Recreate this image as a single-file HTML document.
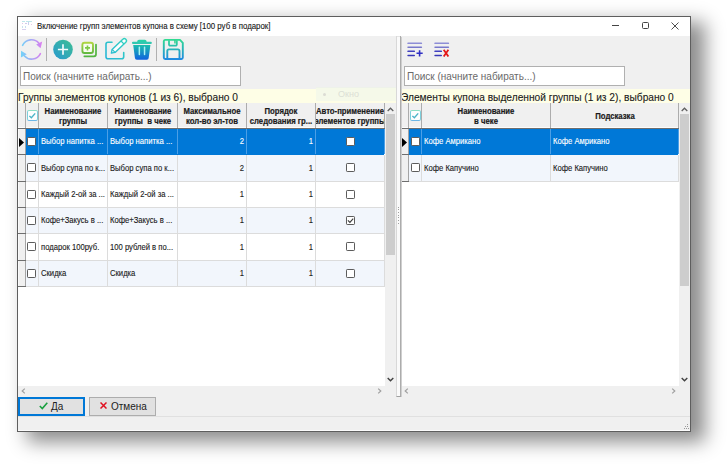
<!DOCTYPE html><html><head><meta charset="utf-8"><style>
*{box-sizing:border-box;margin:0;padding:0}
html,body{width:727px;height:467px;background:#fff;overflow:hidden;font-family:"Liberation Sans",sans-serif;color:#000}
div,span,svg{position:absolute}
.t{white-space:nowrap}
</style></head><body>
<div style="left:17px;top:16px;width:674px;height:416px;background:#f0f0f0;border:1px solid #5e5e5e;box-shadow:12px 8px 18px 2px rgba(0,0,0,0.45)"></div>
<div style="left:18px;top:17px;width:672px;height:19px;background:#fff"></div>
<svg style="left:22px;top:21px" width="11" height="10" viewBox="0 0 11 10"><rect x="0" y="0" width="3" height="1" fill="#bfe6ea"/><rect x="4" y="0" width="6" height="1" fill="#bfe6ea"/><rect x="0" y="2" width="1" height="1" fill="#e0c8e8"/><rect x="3" y="2" width="2" height="1" fill="#d0c8ea"/><rect x="6" y="1" width="1" height="3" fill="#c8d0ee"/><rect x="9" y="3" width="1" height="1" fill="#e8c8e8"/><rect x="0" y="5" width="1" height="2" fill="#c8e0ee"/><rect x="3" y="5" width="1" height="2" fill="#c8e0ee"/><rect x="0" y="8" width="4" height="1" fill="#d8d0ee"/></svg>
<div class="t" style="left:37px;top:22.4px;font-size:8.2px;color:#1a1a1a;-webkit-text-stroke:0.12px #1a1a1a;transform:scaleX(0.96);transform-origin:0 50%">Включение групп элементов купона в схему [100 руб в подарок]</div>
<div style="left:612px;top:25px;width:7px;height:1px;background:#444"></div>
<div style="left:642px;top:22px;width:7px;height:7px;border:1px solid #444;border-radius:1.5px"></div>
<svg style="left:671px;top:22px" width="8" height="8" viewBox="0 0 8 8"><path d="M0.5 0.5L7.5 7.5M7.5 0.5L0.5 7.5" stroke="#444" stroke-width="0.95"/></svg>
<svg style="left:18px;top:36px" width="172" height="27" viewBox="18 36 172 27">
<defs>
<linearGradient id="rg" gradientUnits="userSpaceOnUse" x1="22" y1="0" x2="42" y2="0"><stop offset="0" stop-color="#76d0f8"/><stop offset="1" stop-color="#dc7cf0"/></linearGradient>
<linearGradient id="pg" gradientUnits="userSpaceOnUse" x1="55" y1="58" x2="71" y2="41"><stop offset="0" stop-color="#2a9ccc"/><stop offset="1" stop-color="#3cbc98"/></linearGradient>
<linearGradient id="cg" gradientUnits="userSpaceOnUse" x1="0" y1="41" x2="0" y2="57"><stop offset="0" stop-color="#b8d840"/><stop offset="1" stop-color="#48b040"/></linearGradient>
<linearGradient id="eg" gradientUnits="userSpaceOnUse" x1="105" y1="59" x2="125" y2="40"><stop offset="0" stop-color="#28b4d8"/><stop offset="1" stop-color="#30d0c0"/></linearGradient>
<linearGradient id="tg" gradientUnits="userSpaceOnUse" x1="0" y1="40" x2="0" y2="60"><stop offset="0" stop-color="#20dc9c"/><stop offset="1" stop-color="#1060e0"/></linearGradient>
<linearGradient id="sg" gradientUnits="userSpaceOnUse" x1="0" y1="39" x2="0" y2="60"><stop offset="0" stop-color="#30dc90"/><stop offset="1" stop-color="#2088e4"/></linearGradient>
</defs>
<!-- refresh: center (31.5,49.5) r 9.8 -->
<path d="M22.6 45.4 A9.8 9.8 0 0 1 38.9 43.2" fill="none" stroke="url(#rg)" stroke-width="1.6" stroke-linecap="round"/>
<path d="M36.2 44.6 L42.2 41.4 L40.6 48.2 Z" fill="url(#rg)"/>
<path d="M40.4 53.6 A9.8 9.8 0 0 1 24.2 55.8" fill="none" stroke="url(#rg)" stroke-width="1.6" stroke-linecap="round"/>
<path d="M21.1 50.8 L20.9 57.6 L26.8 54.3 Z" fill="url(#rg)"/>
<rect x="46" y="38" width="1" height="23" fill="#b0b0b0"/>
<!-- plus circle -->
<circle cx="63" cy="49.5" r="9.8" fill="url(#pg)"/>
<path d="M63 44.3 V54.7 M57.9 49.5 H68.1" stroke="#f4fbfb" stroke-width="1.7"/>
<!-- copy add -->
<path d="M96 44.5 V54.3 A2 2 0 0 1 94 56.3 H84.3" fill="none" stroke="#52b440" stroke-width="1.7" stroke-linecap="round"/>
<rect x="82.4" y="42.8" width="10.6" height="10.2" rx="2" fill="#f8fcf0" stroke="url(#cg)" stroke-width="1.9"/>
<path d="M87.5 45.4 V50.4 M85 47.9 H90" stroke="#7cc844" stroke-width="1.6"/>
<!-- edit -->
<path d="M112 42.2 H108 A2 2 0 0 0 106 44.2 V56.8 A2 2 0 0 0 108 58.8 H121.7 A2 2 0 0 0 123.7 56.8 V52.5" fill="none" stroke="url(#eg)" stroke-width="1.6" stroke-linecap="round"/>
<path d="M111.4 53.1 L112.1 49.4 L122.8 39.2 A2.1 2.1 0 0 1 125.8 42.2 L115.1 52.4 Z" fill="#fcfefe" stroke="url(#eg)" stroke-width="1.4" stroke-linejoin="round"/>
<path d="M121 41 L124 44 M112.1 49.4 L115.1 52.4" stroke="url(#eg)" stroke-width="1.2"/>
<!-- trash -->
<path d="M137.2 42 V41.5 A1.8 1.8 0 0 1 139 39.7 H144.8 A1.8 1.8 0 0 1 146.6 41.5 V42 Z" fill="#28d0a8"/>
<rect x="132" y="41.8" width="19.8" height="2.1" rx="1" fill="#30c8b0"/>
<path d="M133.2 45 H150.4 L148.7 57.8 A2 2 0 0 1 146.7 59.8 H136.9 A2 2 0 0 1 134.9 57.8 Z" fill="url(#tg)"/>
<rect x="138.6" y="46.4" width="1.5" height="8.8" rx="0.7" fill="#a8f4f0"/>
<rect x="143.8" y="46.4" width="1.5" height="8.8" rx="0.7" fill="#a8f0f4"/>
<rect x="156" y="38" width="1" height="23" fill="#b0b0b0"/>
<!-- save -->
<path d="M165 39.9 H180 L182.8 42.8 V57.6 A1.4 1.4 0 0 1 181.4 59 H165.2 A1.4 1.4 0 0 1 163.8 57.6 V41.2 A1.3 1.3 0 0 1 165 39.9 Z" fill="none" stroke="url(#sg)" stroke-width="1.9" stroke-linejoin="round"/>
<path d="M169 40.2 V44.4 A1.2 1.2 0 0 0 170.2 45.6 H175.6 A1.2 1.2 0 0 0 176.8 44.4 V40.2" fill="none" stroke="url(#sg)" stroke-width="1.8"/>
<rect x="174.2" y="40" width="1.5" height="3.5" fill="#30d090"/>
<path d="M167.3 59 V51 A1.6 1.6 0 0 1 168.9 49.4 H177.9 A1.6 1.6 0 0 1 179.5 51 V59" fill="none" stroke="url(#sg)" stroke-width="1.9"/>
</svg>
<svg style="left:407px;top:41px" width="18" height="17" viewBox="0 0 18 17"><rect x="0.3" y="1.6" width="14.8" height="1.5" rx="0.7" fill="#8e8ed6"/><rect x="0.3" y="5.4" width="14.8" height="1.5" rx="0.7" fill="#7878cc"/><rect x="0.3" y="9.6" width="7.7" height="1.5" rx="0.7" fill="#4040c0"/><rect x="0.3" y="13.7" width="7.7" height="1.5" rx="0.7" fill="#3838b8"/><path d="M12.6 9.2 V15.4 M9.5 12.3 H15.7" stroke="#3030c4" stroke-width="1.6"/></svg>
<svg style="left:434px;top:41px" width="18" height="17" viewBox="0 0 18 17"><rect x="0.3" y="1.6" width="14.8" height="1.5" rx="0.7" fill="#8e8ed6"/><rect x="0.3" y="5.4" width="14.8" height="1.5" rx="0.7" fill="#7878cc"/><rect x="0.3" y="9.6" width="7.7" height="1.5" rx="0.7" fill="#4040c0"/><rect x="0.3" y="13.7" width="7.7" height="1.5" rx="0.7" fill="#3838b8"/><path d="M9.7 8.8 L14.4 15.4 M14.4 8.8 L9.7 15.4" stroke="#e41818" stroke-width="1.8"/></svg>
<div style="left:20px;top:66px;width:221px;height:20px;background:#fff;border:1px solid #b0b0b0"></div>
<div class="t" style="left:23px;top:71px;font-size:10px;color:#6a6a6a">Поиск (начните набирать...)</div>
<div style="left:18px;top:89px;width:378px;height:14px;background:#fefee6"></div>
<div class="t" style="left:18px;top:92px;font-size:10.2px;color:#1a1a1a;-webkit-text-stroke:0.1px #1a1a1a">Группы элементов купонов (1 из 6), выбрано 0</div>
<div style="left:404px;top:66px;width:221px;height:20px;background:#fff;border:1px solid #b0b0b0"></div>
<div class="t" style="left:407px;top:71px;font-size:10px;color:#6a6a6a">Поиск (начните набирать...)</div>
<div style="left:401px;top:89px;width:289px;height:14px;background:#fefee6"></div>
<div class="t" style="left:401px;top:92px;font-size:10.2px;color:#1a1a1a;-webkit-text-stroke:0.1px #1a1a1a">Элементы купона выделенной группы (1 из 2), выбрано 0</div>
<div style="left:316px;top:87px;width:80px;height:14px;background:#f5f9e9;border-top:1px solid #eef2ea"></div>
<div style="left:323px;top:93px;width:3px;height:3px;border-radius:2px;background:#dcdcd4"></div>
<div class="t" style="left:338px;top:88.5px;font-size:9px;color:#dcdfd6">Окно</div>
<div style="left:18px;top:103px;width:367px;height:283px;background:#fff"></div>
<div style="left:18px;top:103px;width:366px;height:25px;background:#f0f0f0"></div>
<div style="left:18px;top:127px;width:366px;height:1px;background:#fcfcfc"></div>
<div style="left:18px;top:128px;width:367px;height:1px;background:#6e6e6e"></div>
<div style="left:25px;top:103px;width:1px;height:25px;background:#acacac"></div>
<div style="left:38px;top:103px;width:1px;height:25px;background:#acacac"></div>
<div style="left:107px;top:103px;width:1px;height:25px;background:#acacac"></div>
<div style="left:177px;top:103px;width:1px;height:25px;background:#acacac"></div>
<div style="left:246px;top:103px;width:1px;height:25px;background:#acacac"></div>
<div style="left:315px;top:103px;width:1px;height:25px;background:#acacac"></div>
<div style="left:384px;top:103px;width:1px;height:25px;background:#acacac"></div>
<div style="left:27px;top:110px;width:11px;height:11px;border:1.4px solid;border-color:#8cdec4 #7ccfdc #6cb6e6 #7ccfdc;border-radius:2px;background:#fdfefe"></div>
<svg style="left:29px;top:112px" width="7" height="7" viewBox="0 0 7 7"><path d="M0.4 3.9 L2.4 5.8 L6.2 1.4" fill="none" stroke="#4cb4c8" stroke-width="1.4"/></svg>
<div style="left:39px;top:103px;width:68px;height:25px;overflow:hidden"><div class="t" style="left:50%;top:4.2px;transform:translateX(-50%) scaleX(0.9);font-size:8.6px;font-weight:bold;line-height:9.7px;text-align:center;color:#1a1a1a;-webkit-text-stroke:0.2px #1a1a1a">Наименование<br>группы</div></div>
<div style="left:108px;top:103px;width:69px;height:25px;overflow:hidden"><div class="t" style="left:50%;top:4.2px;transform:translateX(-50%) scaleX(0.9);font-size:8.6px;font-weight:bold;line-height:9.7px;text-align:center;color:#1a1a1a;-webkit-text-stroke:0.2px #1a1a1a">Наименование<br>группы&nbsp; в чеке</div></div>
<div style="left:178px;top:103px;width:68px;height:25px;overflow:hidden"><div class="t" style="left:50%;top:4.2px;transform:translateX(-50%) scaleX(0.9);font-size:8.6px;font-weight:bold;line-height:9.7px;text-align:center;color:#1a1a1a;-webkit-text-stroke:0.2px #1a1a1a">Максимальное<br>кол-во эл-тов</div></div>
<div style="left:247px;top:103px;width:68px;height:25px;overflow:hidden"><div class="t" style="left:50%;top:4.2px;transform:translateX(-50%) scaleX(0.9);font-size:8.6px;font-weight:bold;line-height:9.7px;text-align:center;color:#1a1a1a;-webkit-text-stroke:0.2px #1a1a1a">Порядок<br>следования гр...</div></div>
<div style="left:316px;top:103px;width:68px;height:25px;overflow:hidden"><div class="t" style="left:50%;top:4.2px;transform:translateX(-50%) scaleX(0.9);font-size:8.6px;font-weight:bold;line-height:9.7px;text-align:center;color:#1a1a1a;-webkit-text-stroke:0.2px #1a1a1a">Авто-применение<br>элементов группы</div></div>
<div style="left:26px;top:129px;width:358px;height:26px;background:#0078d7"></div>
<div style="left:18px;top:129px;width:7px;height:25px;background:#f0f0f0;border-left:1px solid #fafafa"></div>
<div style="left:18px;top:154px;width:8px;height:1px;background:#6e6e6e"></div>
<div style="left:25px;top:129px;width:1px;height:25px;background:#a4a4a4"></div>
<svg style="left:19px;top:138px" width="6" height="9" viewBox="0 0 6 9"><path d="M0 0 L5 4.5 L0 9 Z" fill="#000"/></svg>
<div style="left:38px;top:129px;width:1px;height:25px;background:#4c9fe6"></div>
<div style="left:107px;top:129px;width:1px;height:25px;background:#4c9fe6"></div>
<div style="left:177px;top:129px;width:1px;height:25px;background:#4c9fe6"></div>
<div style="left:246px;top:129px;width:1px;height:25px;background:#4c9fe6"></div>
<div style="left:315px;top:129px;width:1px;height:25px;background:#4c9fe6"></div>
<div style="left:384px;top:129px;width:1px;height:25px;background:#4c9fe6"></div>
<div style="left:27px;top:137px;width:9px;height:9px;background:#fff;border:1px solid #5c5c5c;border-radius:1.2px"></div>
<div class="t" style="left:41px;top:128.8px;line-height:25px;font-size:8.5px;color:#fff;-webkit-text-stroke:0.12px #fff;transform:scaleX(0.9);transform-origin:0 50%">Выбор напитка ...</div>
<div class="t" style="left:110px;top:128.8px;line-height:25px;font-size:8.5px;color:#fff;-webkit-text-stroke:0.12px #fff;transform:scaleX(0.9);transform-origin:0 50%">Выбор напитка ...</div>
<div class="t" style="left:178px;top:128.8px;width:66px;text-align:right;line-height:25px;font-size:8.5px;color:#fff;-webkit-text-stroke:0.12px #fff;transform:scaleX(0.9);transform-origin:100% 50%">2</div>
<div class="t" style="left:247px;top:128.8px;width:66px;text-align:right;line-height:25px;font-size:8.5px;color:#fff;-webkit-text-stroke:0.12px #fff;transform:scaleX(0.9);transform-origin:100% 50%">1</div>
<div style="left:346px;top:137px;width:9px;height:9px;background:#fff;border:1px solid #5c5c5c;border-radius:1.2px"></div>
<div style="left:26px;top:155px;width:358px;height:27px;background:#f2f6fc"></div>
<div style="left:18px;top:155px;width:7px;height:26px;background:#f0f0f0;border-left:1px solid #fafafa"></div>
<div style="left:18px;top:181px;width:8px;height:1px;background:#6e6e6e"></div>
<div style="left:25px;top:155px;width:1px;height:26px;background:#a4a4a4"></div>
<div style="left:26px;top:181px;width:359px;height:1px;background:#dcdcdc"></div>
<div style="left:38px;top:155px;width:1px;height:27px;background:#dcdcdc"></div>
<div style="left:107px;top:155px;width:1px;height:27px;background:#dcdcdc"></div>
<div style="left:177px;top:155px;width:1px;height:27px;background:#dcdcdc"></div>
<div style="left:246px;top:155px;width:1px;height:27px;background:#dcdcdc"></div>
<div style="left:315px;top:155px;width:1px;height:27px;background:#dcdcdc"></div>
<div style="left:384px;top:155px;width:1px;height:27px;background:#dcdcdc"></div>
<div style="left:27px;top:163px;width:9px;height:9px;background:#fff;border:1px solid #5c5c5c;border-radius:1.2px"></div>
<div class="t" style="left:41px;top:154.8px;line-height:26px;font-size:8.5px;color:#1a1a1a;-webkit-text-stroke:0.12px #1a1a1a;transform:scaleX(0.9);transform-origin:0 50%">Выбор супа по к...</div>
<div class="t" style="left:110px;top:154.8px;line-height:26px;font-size:8.5px;color:#1a1a1a;-webkit-text-stroke:0.12px #1a1a1a;transform:scaleX(0.9);transform-origin:0 50%">Выбор супа по к...</div>
<div class="t" style="left:178px;top:154.8px;width:66px;text-align:right;line-height:26px;font-size:8.5px;color:#1a1a1a;-webkit-text-stroke:0.12px #1a1a1a;transform:scaleX(0.9);transform-origin:100% 50%">2</div>
<div class="t" style="left:247px;top:154.8px;width:66px;text-align:right;line-height:26px;font-size:8.5px;color:#1a1a1a;-webkit-text-stroke:0.12px #1a1a1a;transform:scaleX(0.9);transform-origin:100% 50%">1</div>
<div style="left:346px;top:163px;width:9px;height:9px;background:#fff;border:1px solid #5c5c5c;border-radius:1.2px"></div>
<div style="left:26px;top:182px;width:358px;height:26px;background:#fff"></div>
<div style="left:18px;top:182px;width:7px;height:25px;background:#f0f0f0;border-left:1px solid #fafafa"></div>
<div style="left:18px;top:207px;width:8px;height:1px;background:#6e6e6e"></div>
<div style="left:25px;top:182px;width:1px;height:25px;background:#a4a4a4"></div>
<div style="left:26px;top:207px;width:359px;height:1px;background:#dcdcdc"></div>
<div style="left:38px;top:182px;width:1px;height:26px;background:#dcdcdc"></div>
<div style="left:107px;top:182px;width:1px;height:26px;background:#dcdcdc"></div>
<div style="left:177px;top:182px;width:1px;height:26px;background:#dcdcdc"></div>
<div style="left:246px;top:182px;width:1px;height:26px;background:#dcdcdc"></div>
<div style="left:315px;top:182px;width:1px;height:26px;background:#dcdcdc"></div>
<div style="left:384px;top:182px;width:1px;height:26px;background:#dcdcdc"></div>
<div style="left:27px;top:190px;width:9px;height:9px;background:#fff;border:1px solid #5c5c5c;border-radius:1.2px"></div>
<div class="t" style="left:41px;top:181.8px;line-height:25px;font-size:8.5px;color:#1a1a1a;-webkit-text-stroke:0.12px #1a1a1a;transform:scaleX(0.9);transform-origin:0 50%">Каждый 2-ой за ...</div>
<div class="t" style="left:110px;top:181.8px;line-height:25px;font-size:8.5px;color:#1a1a1a;-webkit-text-stroke:0.12px #1a1a1a;transform:scaleX(0.9);transform-origin:0 50%">Каждый 2-ой за ...</div>
<div class="t" style="left:178px;top:181.8px;width:66px;text-align:right;line-height:25px;font-size:8.5px;color:#1a1a1a;-webkit-text-stroke:0.12px #1a1a1a;transform:scaleX(0.9);transform-origin:100% 50%">1</div>
<div class="t" style="left:247px;top:181.8px;width:66px;text-align:right;line-height:25px;font-size:8.5px;color:#1a1a1a;-webkit-text-stroke:0.12px #1a1a1a;transform:scaleX(0.9);transform-origin:100% 50%">1</div>
<div style="left:346px;top:190px;width:9px;height:9px;background:#fff;border:1px solid #5c5c5c;border-radius:1.2px"></div>
<div style="left:26px;top:208px;width:358px;height:26px;background:#f2f6fc"></div>
<div style="left:18px;top:208px;width:7px;height:25px;background:#f0f0f0;border-left:1px solid #fafafa"></div>
<div style="left:18px;top:233px;width:8px;height:1px;background:#6e6e6e"></div>
<div style="left:25px;top:208px;width:1px;height:25px;background:#a4a4a4"></div>
<div style="left:26px;top:233px;width:359px;height:1px;background:#dcdcdc"></div>
<div style="left:38px;top:208px;width:1px;height:26px;background:#dcdcdc"></div>
<div style="left:107px;top:208px;width:1px;height:26px;background:#dcdcdc"></div>
<div style="left:177px;top:208px;width:1px;height:26px;background:#dcdcdc"></div>
<div style="left:246px;top:208px;width:1px;height:26px;background:#dcdcdc"></div>
<div style="left:315px;top:208px;width:1px;height:26px;background:#dcdcdc"></div>
<div style="left:384px;top:208px;width:1px;height:26px;background:#dcdcdc"></div>
<div style="left:27px;top:216px;width:9px;height:9px;background:#fff;border:1px solid #5c5c5c;border-radius:1.2px"></div>
<div class="t" style="left:41px;top:207.8px;line-height:25px;font-size:8.5px;color:#1a1a1a;-webkit-text-stroke:0.12px #1a1a1a;transform:scaleX(0.9);transform-origin:0 50%">Кофе+Закусь в ...</div>
<div class="t" style="left:110px;top:207.8px;line-height:25px;font-size:8.5px;color:#1a1a1a;-webkit-text-stroke:0.12px #1a1a1a;transform:scaleX(0.9);transform-origin:0 50%">Кофе+Закусь в ...</div>
<div class="t" style="left:178px;top:207.8px;width:66px;text-align:right;line-height:25px;font-size:8.5px;color:#1a1a1a;-webkit-text-stroke:0.12px #1a1a1a;transform:scaleX(0.9);transform-origin:100% 50%">1</div>
<div class="t" style="left:247px;top:207.8px;width:66px;text-align:right;line-height:25px;font-size:8.5px;color:#1a1a1a;-webkit-text-stroke:0.12px #1a1a1a;transform:scaleX(0.9);transform-origin:100% 50%">1</div>
<div style="left:346px;top:216px;width:9px;height:9px;background:#fff;border:1px solid #5c5c5c;border-radius:1.2px"></div>
<svg style="left:347px;top:217px" width="7" height="7" viewBox="0 0 7 7"><path d="M0.9 3.4 L2.9 5.3 L6.2 1.6" fill="none" stroke="#3c3c3c" stroke-width="1.15"/></svg>
<div style="left:26px;top:234px;width:358px;height:27px;background:#fff"></div>
<div style="left:18px;top:234px;width:7px;height:26px;background:#f0f0f0;border-left:1px solid #fafafa"></div>
<div style="left:18px;top:260px;width:8px;height:1px;background:#6e6e6e"></div>
<div style="left:25px;top:234px;width:1px;height:26px;background:#a4a4a4"></div>
<div style="left:26px;top:260px;width:359px;height:1px;background:#dcdcdc"></div>
<div style="left:38px;top:234px;width:1px;height:27px;background:#dcdcdc"></div>
<div style="left:107px;top:234px;width:1px;height:27px;background:#dcdcdc"></div>
<div style="left:177px;top:234px;width:1px;height:27px;background:#dcdcdc"></div>
<div style="left:246px;top:234px;width:1px;height:27px;background:#dcdcdc"></div>
<div style="left:315px;top:234px;width:1px;height:27px;background:#dcdcdc"></div>
<div style="left:384px;top:234px;width:1px;height:27px;background:#dcdcdc"></div>
<div style="left:27px;top:242px;width:9px;height:9px;background:#fff;border:1px solid #5c5c5c;border-radius:1.2px"></div>
<div class="t" style="left:41px;top:233.8px;line-height:26px;font-size:8.5px;color:#1a1a1a;-webkit-text-stroke:0.12px #1a1a1a;transform:scaleX(0.9);transform-origin:0 50%">подарок 100руб.</div>
<div class="t" style="left:110px;top:233.8px;line-height:26px;font-size:8.5px;color:#1a1a1a;-webkit-text-stroke:0.12px #1a1a1a;transform:scaleX(0.9);transform-origin:0 50%">100 рублей в по...</div>
<div class="t" style="left:178px;top:233.8px;width:66px;text-align:right;line-height:26px;font-size:8.5px;color:#1a1a1a;-webkit-text-stroke:0.12px #1a1a1a;transform:scaleX(0.9);transform-origin:100% 50%">1</div>
<div class="t" style="left:247px;top:233.8px;width:66px;text-align:right;line-height:26px;font-size:8.5px;color:#1a1a1a;-webkit-text-stroke:0.12px #1a1a1a;transform:scaleX(0.9);transform-origin:100% 50%">1</div>
<div style="left:346px;top:242px;width:9px;height:9px;background:#fff;border:1px solid #5c5c5c;border-radius:1.2px"></div>
<div style="left:26px;top:261px;width:358px;height:26px;background:#f2f6fc"></div>
<div style="left:18px;top:261px;width:7px;height:25px;background:#f0f0f0;border-left:1px solid #fafafa"></div>
<div style="left:18px;top:286px;width:8px;height:1px;background:#6e6e6e"></div>
<div style="left:25px;top:261px;width:1px;height:25px;background:#a4a4a4"></div>
<div style="left:26px;top:286px;width:359px;height:1px;background:#dcdcdc"></div>
<div style="left:38px;top:261px;width:1px;height:26px;background:#dcdcdc"></div>
<div style="left:107px;top:261px;width:1px;height:26px;background:#dcdcdc"></div>
<div style="left:177px;top:261px;width:1px;height:26px;background:#dcdcdc"></div>
<div style="left:246px;top:261px;width:1px;height:26px;background:#dcdcdc"></div>
<div style="left:315px;top:261px;width:1px;height:26px;background:#dcdcdc"></div>
<div style="left:384px;top:261px;width:1px;height:26px;background:#dcdcdc"></div>
<div style="left:27px;top:269px;width:9px;height:9px;background:#fff;border:1px solid #5c5c5c;border-radius:1.2px"></div>
<div class="t" style="left:41px;top:260.8px;line-height:25px;font-size:8.5px;color:#1a1a1a;-webkit-text-stroke:0.12px #1a1a1a;transform:scaleX(0.9);transform-origin:0 50%">Скидка</div>
<div class="t" style="left:110px;top:260.8px;line-height:25px;font-size:8.5px;color:#1a1a1a;-webkit-text-stroke:0.12px #1a1a1a;transform:scaleX(0.9);transform-origin:0 50%">Скидка</div>
<div class="t" style="left:178px;top:260.8px;width:66px;text-align:right;line-height:25px;font-size:8.5px;color:#1a1a1a;-webkit-text-stroke:0.12px #1a1a1a;transform:scaleX(0.9);transform-origin:100% 50%">1</div>
<div class="t" style="left:247px;top:260.8px;width:66px;text-align:right;line-height:25px;font-size:8.5px;color:#1a1a1a;-webkit-text-stroke:0.12px #1a1a1a;transform:scaleX(0.9);transform-origin:100% 50%">1</div>
<div style="left:346px;top:269px;width:9px;height:9px;background:#fff;border:1px solid #5c5c5c;border-radius:1.2px"></div>
<div style="left:385px;top:103px;width:11px;height:283px;background:#f0f0f0"></div>
<div style="left:386px;top:114px;width:9px;height:141px;background:#cdcdcd"></div>
<svg style="left:387px;top:107px" width="7" height="5" viewBox="0 0 7 5"><path d="M0.7 4 L3.5 1.2 L6.3 4" fill="none" stroke="#606060" stroke-width="1.3"/></svg>
<svg style="left:387px;top:377px" width="7" height="5" viewBox="0 0 7 5"><path d="M0.7 1 L3.5 3.8 L6.3 1" fill="none" stroke="#404040" stroke-width="1.4"/></svg>
<div style="left:401px;top:103px;width:278px;height:283px;background:#fff"></div>
<div style="left:401px;top:103px;width:277px;height:25px;background:#f0f0f0"></div>
<div style="left:401px;top:127px;width:277px;height:1px;background:#fcfcfc"></div>
<div style="left:401px;top:128px;width:278px;height:1px;background:#6e6e6e"></div>
<div style="left:408px;top:103px;width:1px;height:25px;background:#acacac"></div>
<div style="left:421px;top:103px;width:1px;height:25px;background:#acacac"></div>
<div style="left:550px;top:103px;width:1px;height:25px;background:#acacac"></div>
<div style="left:678px;top:103px;width:1px;height:25px;background:#acacac"></div>
<div style="left:410px;top:110px;width:11px;height:11px;border:1.4px solid;border-color:#8cdec4 #7ccfdc #6cb6e6 #7ccfdc;border-radius:2px;background:#fdfefe"></div>
<svg style="left:412px;top:112px" width="7" height="7" viewBox="0 0 7 7"><path d="M0.4 3.9 L2.4 5.8 L6.2 1.4" fill="none" stroke="#4cb4c8" stroke-width="1.4"/></svg>
<div style="left:422px;top:103px;width:128px;height:25px;overflow:hidden"><div class="t" style="left:50%;top:4.2px;transform:translateX(-50%) scaleX(0.9);font-size:8.6px;font-weight:bold;line-height:9.7px;text-align:center;color:#1a1a1a;-webkit-text-stroke:0.2px #1a1a1a">Наименование<br>в чеке</div></div>
<div style="left:551px;top:103px;width:127px;height:25px;overflow:hidden"><div class="t" style="left:50%;top:8.6px;transform:translateX(-50%) scaleX(0.9);font-size:8.6px;font-weight:bold;line-height:9.7px;text-align:center;color:#1a1a1a;-webkit-text-stroke:0.2px #1a1a1a">Подсказка</div></div>
<div style="left:409px;top:129px;width:269px;height:26px;background:#0078d7"></div>
<div style="left:401px;top:129px;width:7px;height:25px;background:#f0f0f0;border-left:1px solid #fafafa"></div>
<div style="left:401px;top:154px;width:8px;height:1px;background:#6e6e6e"></div>
<div style="left:408px;top:129px;width:1px;height:25px;background:#a4a4a4"></div>
<svg style="left:402px;top:138px" width="6" height="9" viewBox="0 0 6 9"><path d="M0 0 L5 4.5 L0 9 Z" fill="#000"/></svg>
<div style="left:421px;top:129px;width:1px;height:25px;background:#4c9fe6"></div>
<div style="left:550px;top:129px;width:1px;height:25px;background:#4c9fe6"></div>
<div style="left:678px;top:129px;width:1px;height:25px;background:#4c9fe6"></div>
<div style="left:411px;top:137px;width:9px;height:9px;background:#fff;border:1px solid #5c5c5c;border-radius:1.2px"></div>
<div class="t" style="left:424px;top:128.8px;line-height:25px;font-size:8.5px;color:#fff;-webkit-text-stroke:0.12px #fff;transform:scaleX(0.9);transform-origin:0 50%">Кофе Амрикано</div>
<div class="t" style="left:553px;top:128.8px;line-height:25px;font-size:8.5px;color:#fff;-webkit-text-stroke:0.12px #fff;transform:scaleX(0.9);transform-origin:0 50%">Кофе Амрикано</div>
<div style="left:409px;top:155px;width:269px;height:27px;background:#f2f6fc"></div>
<div style="left:401px;top:155px;width:7px;height:26px;background:#f0f0f0;border-left:1px solid #fafafa"></div>
<div style="left:401px;top:181px;width:8px;height:1px;background:#6e6e6e"></div>
<div style="left:408px;top:155px;width:1px;height:26px;background:#a4a4a4"></div>
<div style="left:409px;top:181px;width:270px;height:1px;background:#dcdcdc"></div>
<div style="left:421px;top:155px;width:1px;height:27px;background:#dcdcdc"></div>
<div style="left:550px;top:155px;width:1px;height:27px;background:#dcdcdc"></div>
<div style="left:678px;top:155px;width:1px;height:27px;background:#dcdcdc"></div>
<div style="left:411px;top:163px;width:9px;height:9px;background:#fff;border:1px solid #5c5c5c;border-radius:1.2px"></div>
<div class="t" style="left:424px;top:154.8px;line-height:26px;font-size:8.5px;color:#1a1a1a;-webkit-text-stroke:0.12px #1a1a1a;transform:scaleX(0.9);transform-origin:0 50%">Кофе Капучино</div>
<div class="t" style="left:553px;top:154.8px;line-height:26px;font-size:8.5px;color:#1a1a1a;-webkit-text-stroke:0.12px #1a1a1a;transform:scaleX(0.9);transform-origin:0 50%">Кофе Капучино</div>
<div style="left:679px;top:103px;width:11px;height:283px;background:#f0f0f0"></div>
<div style="left:680px;top:114px;width:9px;height:172px;background:#cdcdcd"></div>
<svg style="left:681px;top:107px" width="7" height="5" viewBox="0 0 7 5"><path d="M0.7 4 L3.5 1.2 L6.3 4" fill="none" stroke="#606060" stroke-width="1.3"/></svg>
<svg style="left:681px;top:377px" width="7" height="5" viewBox="0 0 7 5"><path d="M0.7 1 L3.5 3.8 L6.3 1" fill="none" stroke="#404040" stroke-width="1.4"/></svg>
<div style="left:396px;top:36px;width:5px;height:361px;background:#fafafa;border-left:1px solid #d8d8d8;border-right:1px solid #acacac;border-bottom:1px solid #a0a0a0"></div>
<div style="left:398px;top:207px;width:1px;height:1px;background:#a0a0a0"></div>
<div style="left:398px;top:209px;width:1px;height:1px;background:#a0a0a0"></div>
<div style="left:398px;top:212px;width:1px;height:1px;background:#a0a0a0"></div>
<div style="left:398px;top:215px;width:1px;height:1px;background:#a0a0a0"></div>
<div style="left:398px;top:217px;width:1px;height:1px;background:#a0a0a0"></div>
<div style="left:398px;top:220px;width:1px;height:1px;background:#a0a0a0"></div>
<div style="left:398px;top:223px;width:1px;height:1px;background:#a0a0a0"></div>
<div style="left:401px;top:37px;width:1px;height:360px;background:#cfcfcf"></div>
<div style="left:397px;top:36px;width:3px;height:1px;background:#e4e4e4"></div>
<svg style="left:20.5px;top:388px" width="5" height="6" viewBox="0 0 5 6"><path d="M3.8 0.6 L1.2 3 L3.8 5.4" fill="none" stroke="#a0a0a0" stroke-width="1.2"/></svg>
<svg style="left:377px;top:388px" width="5" height="6" viewBox="0 0 5 6"><path d="M1.2 0.6 L3.8 3 L1.2 5.4" fill="none" stroke="#a0a0a0" stroke-width="1.2"/></svg>
<svg style="left:404px;top:388px" width="5" height="6" viewBox="0 0 5 6"><path d="M3.8 0.6 L1.2 3 L3.8 5.4" fill="none" stroke="#a0a0a0" stroke-width="1.2"/></svg>
<svg style="left:671px;top:388px" width="5" height="6" viewBox="0 0 5 6"><path d="M1.2 0.6 L3.8 3 L1.2 5.4" fill="none" stroke="#a0a0a0" stroke-width="1.2"/></svg>
<div style="left:18px;top:416px;width:672px;height:1px;background:#e0e0e0"></div>
<div style="left:18px;top:430px;width:672px;height:1px;background:#fcfcfc"></div>
<div style="left:18px;top:397px;width:67px;height:19px;background:#e1e1e1;border:2px solid #0078d7"></div>
<svg style="left:39px;top:402px" width="9" height="8" viewBox="0 0 9 8"><path d="M0.8 4 L3.3 6.6 L8.3 0.8" fill="none" stroke="#1aa040" stroke-width="1.6"/></svg>
<div class="t" style="left:51px;top:401px;font-size:10px;color:#222">Да</div>
<div style="left:89px;top:397px;width:67px;height:19px;background:#e1e1e1;border:1px solid #adadad"></div>
<svg style="left:100px;top:402px" width="7" height="7" viewBox="0 0 7 7"><path d="M0.5 0.5 L6.5 6.5 M6.5 0.5 L0.5 6.5" fill="none" stroke="#e01020" stroke-width="1.5"/></svg>
<div class="t" style="left:111px;top:401px;font-size:10px;color:#222">Отмена</div>
<svg style="left:684px;top:424px" width="5" height="5" viewBox="0 0 5 5"><rect x="3" y="0" width="1" height="1" fill="#999"/><rect x="1" y="2" width="1" height="1" fill="#999"/><rect x="3" y="2" width="1" height="1" fill="#999"/><rect x="0" y="4" width="1" height="1" fill="#999"/><rect x="2" y="4" width="1" height="1" fill="#999"/><rect x="4" y="4" width="1" height="1" fill="#999"/></svg>
</body></html>
